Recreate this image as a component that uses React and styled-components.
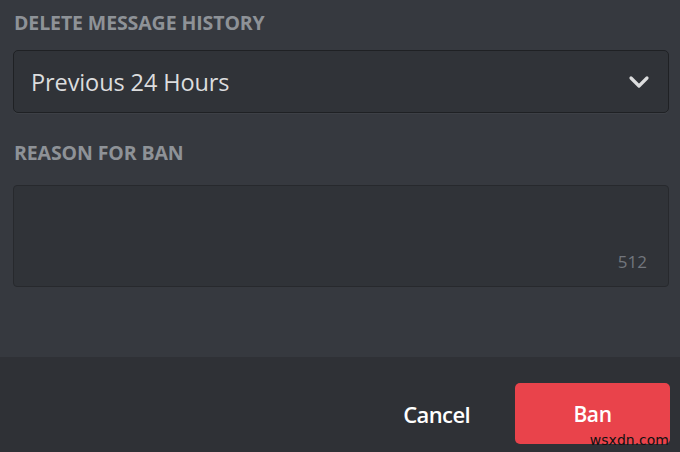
import React from 'react'
import styled, { createGlobalStyle } from 'styled-components'

const GlobalStyle = createGlobalStyle`
    html, body {
        margin: 0;
        padding: 0;
        background: #36393f;
    }
    * {
        box-sizing: border-box;
    }
`

const Modal = styled.div`
    position: relative;
    width: 680px;
    height: 452px;
    display: flex;
    flex-direction: column;
    background: #36393f;
    font-family: 'Open Sans', 'Noto Sans', sans-serif;
    overflow: hidden;
`

const Body = styled.div`
    flex: 1;
    display: flex;
    flex-direction: column;
    padding: 11px 11px 0 13px;
`

const Label = styled.h5`
    margin: 0 0 0 1px;
    height: 24px;
    font-size: 19.5px;
    line-height: 24px;
    font-weight: 700;
    letter-spacing: -0.1px;
    text-transform: uppercase;
    color: #8e9297;
    margin-top: ${p => p.$top || 0}px;
`

const Select = styled.div`
    margin-top: 15px;
    height: 63px;
    display: flex;
    align-items: center;
    justify-content: space-between;
    padding: 0 18px 0 17px;
    background: #303338;
    border: 1px solid #1f2124;
    border-radius: 5px;
    box-shadow: 0 2px 0 -1px #3d4046;
`

const Value = styled.span`
    font-size: 23.5px;
    color: #dcddde;
    letter-spacing: -0.1px;
`

const Chevron = styled.svg`
    width: 22px;
    height: 14px;
    color: #dcddde;
`

const TextArea = styled.div`
    margin-top: 20px;
    height: 102px;
    display: flex;
    align-items: flex-end;
    justify-content: flex-end;
    padding: 0 21px 13px 0;
    background: #303338;
    border: 1px solid #27292d;
    border-radius: 4px;
`

const Counter = styled.span`
    font-size: 17px;
    line-height: 22px;
    color: #72767d;
`

const Footer = styled.div`
    height: 95px;
    display: flex;
    align-items: flex-start;
    justify-content: flex-end;
    gap: 45px;
    padding: 26px 10px 0 0;
    background: #2f3136;
`

const LinkButton = styled.button`
    height: 61px;
    background: none;
    border: none;
    padding: 0;
    font-family: inherit;
    font-size: 22px;
    font-weight: 600;
    color: #ffffff;
    letter-spacing: -0.6px;
`

const DangerButton = styled.button`
    width: 155px;
    height: 61px;
    border: none;
    border-radius: 5px;
    background: #e9434b;
    color: #ffffff;
    font-family: inherit;
    font-size: 21px;
    font-weight: 600;
    letter-spacing: -0.4px;
`

const Watermark = styled.span`
    position: absolute;
    right: 11px;
    bottom: 4px;
    font-family: 'DejaVu Sans', sans-serif;
    font-size: 14px;
    color: #111111;
`

export default function App() {
    return (
        <>
            <GlobalStyle />
            <Modal>
                <Body>
                    <Label>Delete Message History</Label>
                    <Select>
                        <Value>Previous 24 Hours</Value>
                        <Chevron viewBox="0 0 22 14" fill="none">
                            <path d="M3 3l8 8 8-8" stroke="currentColor" strokeWidth="3.2" strokeLinecap="round" strokeLinejoin="round" />
                        </Chevron>
                    </Select>
                    <Label $top={28}>Reason for Ban</Label>
                    <TextArea>
                        <Counter>512</Counter>
                    </TextArea>
                </Body>
                <Footer>
                    <LinkButton>Cancel</LinkButton>
                    <DangerButton>Ban</DangerButton>
                </Footer>
                <Watermark>wsxdn.com</Watermark>
            </Modal>
        </>
    )
}
